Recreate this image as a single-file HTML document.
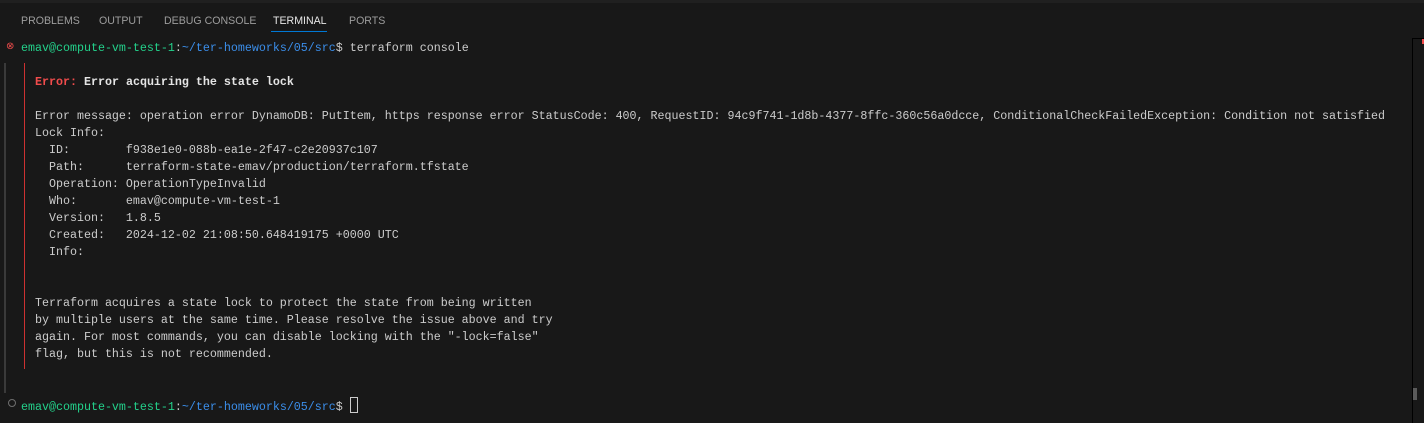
<!DOCTYPE html>
<html><head><meta charset="utf-8"><style>
html,body{margin:0;padding:0;width:1424px;height:423px;overflow:hidden;background:#181818;}
.top{position:absolute;left:0;top:0;width:1424px;height:3px;background:#202020;}
.tabs{position:absolute;top:15px;left:0;font-family:"Liberation Sans",sans-serif;font-size:10.6px;color:#9d9d9d;}
.tabs span{position:absolute;white-space:nowrap;}
.ul{position:absolute;left:271px;top:31px;width:56px;height:1px;background:#0078d4;}
pre{position:absolute;left:21px;top:40px;margin:0;font-family:"Liberation Mono",monospace;font-size:11.67px;line-height:17px;color:#cccccc;}
.g{color:#23d18b}.b{color:#3b8eea}.r{color:#f14c4c}.w{color:#e5e5e5}
.bar{position:absolute;left:24px;top:63px;width:1px;height:306px;background:#cd3131;}
.gut{position:absolute;left:4px;top:63px;width:2px;height:330px;background:#3a3a3a;}
.sb{position:absolute;left:1412px;top:38px;width:1px;height:385px;background:#000;}
.sbt{position:absolute;left:1412px;top:38px;width:12px;height:1px;background:#000;}
.mk{position:absolute;left:1422px;top:39px;width:2px;height:5px;background:#f14c4c;}
.th{position:absolute;left:1413px;top:388px;width:4px;height:12px;background:#5a5a5a;}
.cur{display:inline-block;width:6px;height:14px;border:1px solid #cccccc;vertical-align:-3px;}
.ic1{position:absolute;left:6px;top:41px;font-size:10px;color:#f14c4c;font-family:"DejaVu Sans",sans-serif}
.ic2{position:absolute;left:8px;top:399px;width:6px;height:6px;border:1px solid #6e6e6e;border-radius:50%;}
</style></head><body>
<div class="top"></div>
<div class="tabs">
<span style="left:21px">PROBLEMS</span>
<span style="left:99px">OUTPUT</span>
<span style="left:164px">DEBUG CONSOLE</span>
<span style="left:273px;color:#e7e7e7">TERMINAL</span>
<span style="left:349px">PORTS</span>
</div>
<div class="ul"></div>
<div class="ic1">⊗</div>
<div class="ic2"></div>
<div class="gut"></div>
<div class="bar"></div>
<div class="sbt"></div><div class="sb"></div><div class="mk"></div><div class="th"></div>
<pre><span class="g">emav@compute-vm-test-1</span>:<span class="b">~/ter-homeworks/05/src</span>$ terraform console

  <b class="r">Error:</b> <b class="w">Error acquiring the state lock</b>

  Error message: operation error DynamoDB: PutItem, https response error StatusCode: 400, RequestID: 94c9f741-1d8b-4377-8ffc-360c56a0dcce, ConditionalCheckFailedException: Condition not satisfied
  Lock Info:
    ID:        f938e1e0-088b-ea1e-2f47-c2e20937c107
    Path:      terraform-state-emav/production/terraform.tfstate
    Operation: OperationTypeInvalid
    Who:       emav@compute-vm-test-1
    Version:   1.8.5
    Created:   2024-12-02 21:08:50.648419175 +0000 UTC
    Info:


  Terraform acquires a state lock to protect the state from being written
  by multiple users at the same time. Please resolve the issue above and try
  again. For most commands, you can disable locking with the "-lock=false"
  flag, but this is not recommended.


<span class="g">emav@compute-vm-test-1</span>:<span class="b">~/ter-homeworks/05/src</span>$ <span class="cur"></span></pre>
</body></html>
